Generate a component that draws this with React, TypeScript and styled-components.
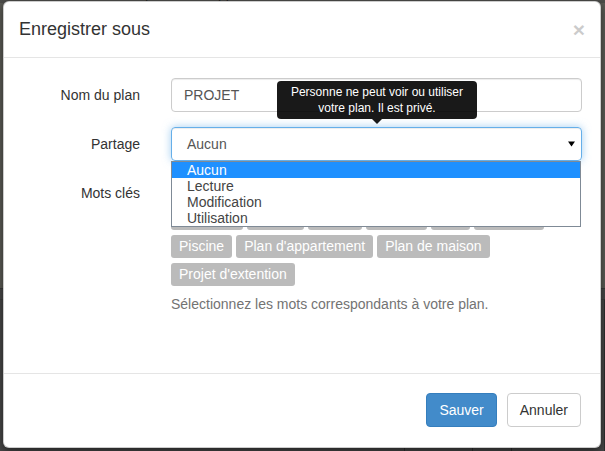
import React from "react";
import styled, { createGlobalStyle } from "styled-components";

const GlobalStyle = createGlobalStyle`
  html, body { margin: 0; padding: 0; }
  body { background: #4f4f4b; font-family: "Liberation Sans", Arial, sans-serif; }
  * { box-sizing: border-box; }
`;

const Page = styled.div`
  position: relative;
  width: 605px;
  height: 451px;
  overflow: hidden;
  display: flex;
  flex-direction: column;
  background: #575752;
`;

const MenuBar = styled.div`
  height: 3px;
  flex: none;
  display: flex;
  align-items: flex-end;
  gap: 44px;
  padding-left: 12px;
  overflow: hidden;
  font-size: 14px;
  line-height: 16px;
  color: #222;
  background: #4c4c49;
`;

const MenuItem = styled.span`
  flex: none;
`;

const UpperArea = styled.div`
  flex: 1;
  background: #5a5a54;
`;

const LowerArea = styled.div`
  height: 163px;
  flex: none;
  background: #464646;
  border-top: 1px solid #3a3a3a;
  display: grid;
  grid-template-columns: 405px 68px 39px 1fr;
`;

const LowerCell = styled.div`
  border-right: 1px solid #2e2e2e;
  border-top: 1px solid #3d3d3d;
  margin-top: 10px;
`;

const Modal = styled.div`
  position: absolute;
  top: 1px;
  left: 3px;
  width: 598px;
  background: #fff;
  border: 1px solid rgba(0, 0, 0, 0.2);
  border-radius: 6px;
  box-shadow: 0 3px 9px rgba(0, 0, 0, 0.5);
  display: flex;
  flex-direction: column;
`;

const Header = styled.div`
  display: flex;
  align-items: flex-start;
  justify-content: space-between;
  padding: 15px;
  border-bottom: 1px solid #e5e5e5;
`;

const Title = styled.h4`
  margin: 0;
  font-size: 18px;
  line-height: 25px;
  font-weight: 500;
  color: #333;
`;

const Close = styled.button`
  border: 0;
  background: none;
  padding: 0;
  margin-top: 2px;
  font-family: inherit;
  font-size: 21px;
  font-weight: bold;
  line-height: 21px;
  color: #000;
  opacity: 0.2;
`;

const Body = styled.div`
  padding: 20px 18px 59px 15px;
  display: flex;
  flex-direction: column;
  gap: 15px;
`;

const FormRow = styled.div`
  display: grid;
  grid-template-columns: 121px 411px;
  column-gap: 31px;
`;

const Label = styled.label`
  text-align: right;
  padding-top: 7px;
  font-size: 14px;
  line-height: 20px;
  color: #333;
`;

const Input = styled.input`
  display: block;
  width: 100%;
  height: 34px;
  padding: 6px 12px;
  font-family: inherit;
  font-size: 14px;
  line-height: 20px;
  color: #555;
  border: 1px solid #ccc;
  border-radius: 4px;
  box-shadow: inset 0 1px 1px rgba(0, 0, 0, 0.075);
  outline: none;
`;

const SelectWrap = styled.div`
  position: relative;
`;

const SelectBox = styled.div`
  height: 34px;
  display: flex;
  align-items: center;
  justify-content: space-between;
  padding: 0 6px 0 15px;
  border: 1px solid #66afe9;
  border-radius: 4px;
  box-shadow: inset 0 1px 1px rgba(0, 0, 0, 0.075), 0 0 8px rgba(102, 175, 233, 0.6);
  font-size: 14px;
  color: #555;
`;

const Dropdown = styled.ul`
  position: absolute;
  top: 100%;
  left: 0;
  right: 1px;
  margin: 0;
  padding: 0;
  list-style: none;
  background: #fff;
  border: 1px solid #7f8a96;
  z-index: 3;
  font-size: 14px;
  line-height: 16px;
  color: #444;
`;

const Option = styled.li<{ $active?: boolean }>`
  padding-left: 15px;
  background: ${(p) => (p.$active ? "#1e90ff" : "transparent")};
  color: ${(p) => (p.$active ? "#fff" : "#444")};
`;

const Tooltip = styled.div`
  position: absolute;
  bottom: calc(100% + 8px);
  left: 106px;
  width: 200px;
  padding: 3px 8px;
  background: rgba(0, 0, 0, 0.9);
  color: #fff;
  font-size: 12px;
  line-height: 16px;
  text-align: center;
  border-radius: 4px;
  z-index: 4;

  &::after {
    content: "";
    position: absolute;
    top: 100%;
    left: 50%;
    margin-left: -5px;
    border-style: solid;
    border-width: 5px 5px 0;
    border-color: rgba(0, 0, 0, 0.9) transparent transparent;
  }
`;

const TagArea = styled.div`
  padding-top: 3px;
  display: flex;
  flex-direction: column;
`;

const TagList = styled.div`
  display: flex;
  flex-wrap: wrap;
  gap: 5px 4px;
`;

const Tag = styled.span`
  background: #bbb;
  color: #fff;
  font-size: 14px;
  line-height: 17px;
  padding: 3px 8px;
  border-radius: 3px;
`;

const Help = styled.p`
  margin: 8px 0 0;
  font-size: 14px;
  line-height: 20px;
  color: #737373;
`;

const Footer = styled.div`
  display: flex;
  justify-content: flex-end;
  gap: 10px;
  padding: 19px 19px 20px;
  border-top: 1px solid #e5e5e5;
`;

const Button = styled.button<{ $primary?: boolean }>`
  height: 34px;
  padding: 6px 12px;
  font-family: inherit;
  font-size: 14px;
  line-height: 20px;
  border-radius: 4px;
  border: 1px solid ${(p) => (p.$primary ? "#357ebd" : "#ccc")};
  background: ${(p) => (p.$primary ? "#428bca" : "#fff")};
  color: ${(p) => (p.$primary ? "#fff" : "#333")};
`;

const tags = [
  "Bâtiment",
  "Cuisine",
  "Salle de bain",
  "Chambre",
  "Salon",
  "Extérieur",
  "Chalet",
  "Jardin",
  "Bureau",
  "Loft",
  "Terrasse",
  "Piscine",
  "Plan d'appartement",
  "Plan de maison",
  "Projet d'extention",
];

const options = ["Aucun", "Lecture", "Modification", "Utilisation"];

export default function App() {
  return (
    <>
      <GlobalStyle />
      <Page>
        <MenuBar>
          <MenuItem>Fichier</MenuItem>
          <MenuItem>Affichage</MenuItem>
          <MenuItem>Rapport</MenuItem>
        </MenuBar>
        <UpperArea />
        <LowerArea>
          <LowerCell />
          <LowerCell />
          <LowerCell />
          <LowerCell />
        </LowerArea>

        <Modal>
          <Header>
            <Title>Enregistrer sous</Title>
            <Close>×</Close>
          </Header>
          <Body>
            <FormRow>
              <Label>Nom du plan</Label>
              <Input value="PROJET" readOnly />
            </FormRow>
            <FormRow>
              <Label>Partage</Label>
              <SelectWrap>
                <Tooltip>Personne ne peut voir ou utiliser votre plan. Il est privé.</Tooltip>
                <SelectBox>
                  <span>Aucun</span>
                  <svg width="7" height="6" viewBox="0 0 7 6">
                    <polygon points="0,0.5 7,0.5 3.5,5.5" fill="#000" />
                  </svg>
                </SelectBox>
                <Dropdown>
                  {options.map((o, i) => (
                    <Option key={o} $active={i === 0}>
                      {o}
                    </Option>
                  ))}
                </Dropdown>
              </SelectWrap>
            </FormRow>
            <FormRow>
              <Label>Mots clés</Label>
              <TagArea>
                <TagList>
                  {tags.map((t) => (
                    <Tag key={t}>{t}</Tag>
                  ))}
                </TagList>
                <Help>Sélectionnez les mots correspondants à votre plan.</Help>
              </TagArea>
            </FormRow>
          </Body>
          <Footer>
            <Button $primary>Sauver</Button>
            <Button>Annuler</Button>
          </Footer>
        </Modal>
      </Page>
    </>
  );
}
